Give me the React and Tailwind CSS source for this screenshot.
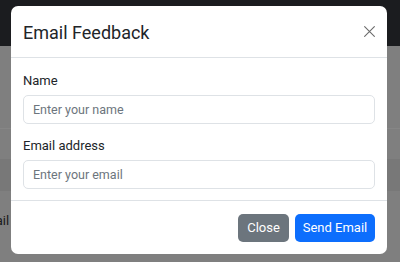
import React from 'react';

const XIcon = () => (
  <svg width="13" height="13" viewBox="0 0 16 16" fill="none" stroke="#6c6c6c" strokeWidth="1.4" strokeLinecap="round">
    <path d="M2 2l12 12M14 2L2 14" />
  </svg>
);

const Field = ({ label, placeholder, type }) => (
  <div className="flex flex-col">
    <label className="text-[13px] leading-[18px] text-[#212529] mb-[5px]">{label}</label>
    <input
      type={type}
      placeholder={placeholder}
      className="h-[29px] w-full rounded-[5px] border border-[#dee2e6] px-[9px] text-[12.5px] text-[#212529] placeholder:text-[#6c757d] outline-none"
    />
  </div>
);

export default function App() {
  return (
    <div className="relative w-[400px] h-[262px] overflow-hidden bg-[#7f7f7f]" style={{ fontFamily: 'Roboto, "Liberation Sans", sans-serif' }}>
      {/* page behind the backdrop */}
      <div className="h-[46px] bg-[#1b1c1f]" />
      <div className="h-[83px] border-b border-[#868686]" />
      <div className="h-[30px]" />
      <div className="h-[32px] bg-[#787878]" />
      <div className="h-[22px]" />
      <div className="text-[13px] leading-[16px] text-[#1a1a1a] -ml-[23px]">Email</div>

      {/* modal */}
      <div className="absolute left-[11px] top-[6px] w-[376px] h-[248px] rounded-[7px] bg-white flex flex-col">
        <div className="h-[52px] flex items-center justify-between pl-[12px] pr-[11px] border-b border-[#dee2e6]">
          <h2 className="text-[18px] text-[#212529] font-normal mt-[2px]">Email Feedback</h2>
          <XIcon />
        </div>
        <div className="flex flex-col gap-[13px] px-[12px] pt-[14px] h-[143px] border-b border-[#dee2e6]">
          <Field label="Name" placeholder="Enter your name" type="text" />
          <Field label="Email address" placeholder="Enter your email" type="email" />
        </div>
        <div className="flex flex-1 items-center justify-end gap-[6px] px-[12px]">
          <button className="h-[28px] w-[51px] rounded-[5px] bg-[#6c757d] text-white text-[13px]">Close</button>
          <button className="h-[28px] w-[80px] rounded-[5px] bg-[#0d6efd] text-white text-[13px]">Send Email</button>
        </div>
      </div>
    </div>
  );
}
